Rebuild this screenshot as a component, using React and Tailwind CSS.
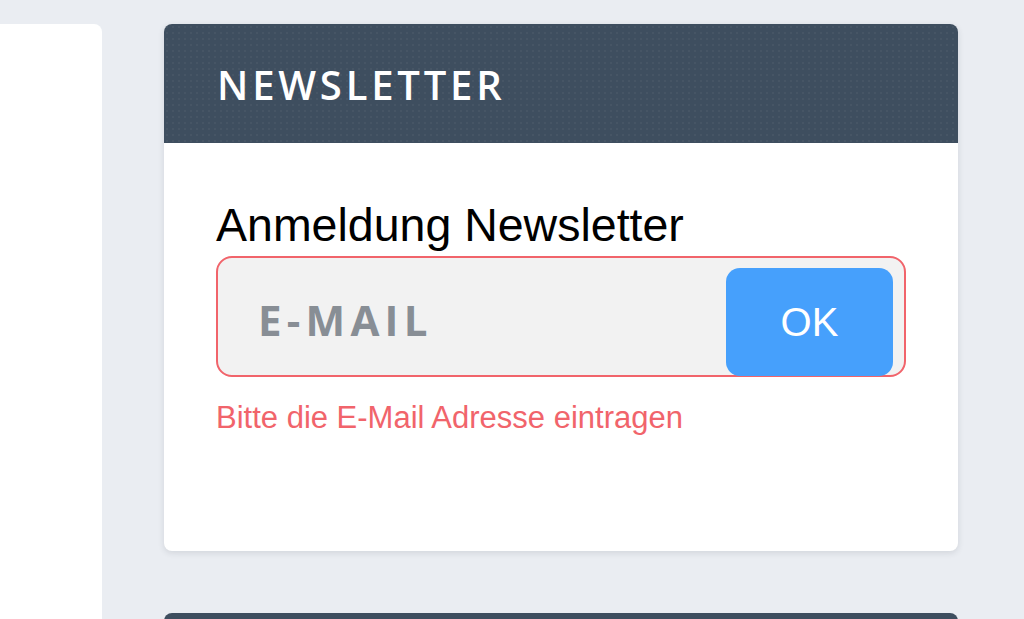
export default function App() {
  return (
    <div className="flex h-[619px] overflow-hidden bg-[#eaedf2]">
      {/* left column panel */}
      <div className="mt-[24px] w-[102px] shrink-0 rounded-tr-lg bg-white" />

      {/* right column */}
      <div className="ml-[62px] flex w-[794px] flex-col gap-[62px] pt-[24px]">
        {/* Newsletter card */}
        <div className="shrink-0 overflow-hidden rounded-lg bg-white shadow-[0_2px_6px_rgba(30,40,60,0.12)]">
          <div className="flex h-[119px] items-center bg-[#3e4e5f] bg-[radial-gradient(rgba(255,255,255,0.04)_1px,transparent_1px)] bg-[length:6px_6px] px-[53px]">
            <h2 className="pt-[2px] font-['Open_Sans',sans-serif] text-[40px] font-semibold leading-none tracking-[0.095em] text-white">
              NEWSLETTER
            </h2>
          </div>

          <div className="h-[408px] px-[52px] pt-[56px] font-['Liberation_Sans',Arial,sans-serif]">
            <p className="text-[46.5px] leading-[53px] text-black">Anmeldung Newsletter</p>

            <div className="mt-[4px] flex h-[121px] rounded-[16px] border-2 border-[#f1646b] bg-[#f2f2f2]">
              <span className="self-center pt-[5px] pl-[40px] font-['Open_Sans',sans-serif] text-[42px] font-bold tracking-[0.125em] text-[#888e95]">
                E-MAIL
              </span>
              <button className="mt-[10px] mr-[11px] mb-[-1px] ml-auto flex w-[167px] items-center justify-center rounded-[14px] bg-[#46a0fc] text-[40px] text-white">
                OK
              </button>
            </div>

            <p className="mt-[24px] text-[31px] leading-[34px] text-[#f1646b]">
              Bitte die E-Mail Adresse eintragen
            </p>
          </div>
        </div>

        {/* next card (cut off) */}
        <div className="h-[119px] shrink-0 rounded-t-lg bg-[#3e4e5f]" />
      </div>
    </div>
  );
}
